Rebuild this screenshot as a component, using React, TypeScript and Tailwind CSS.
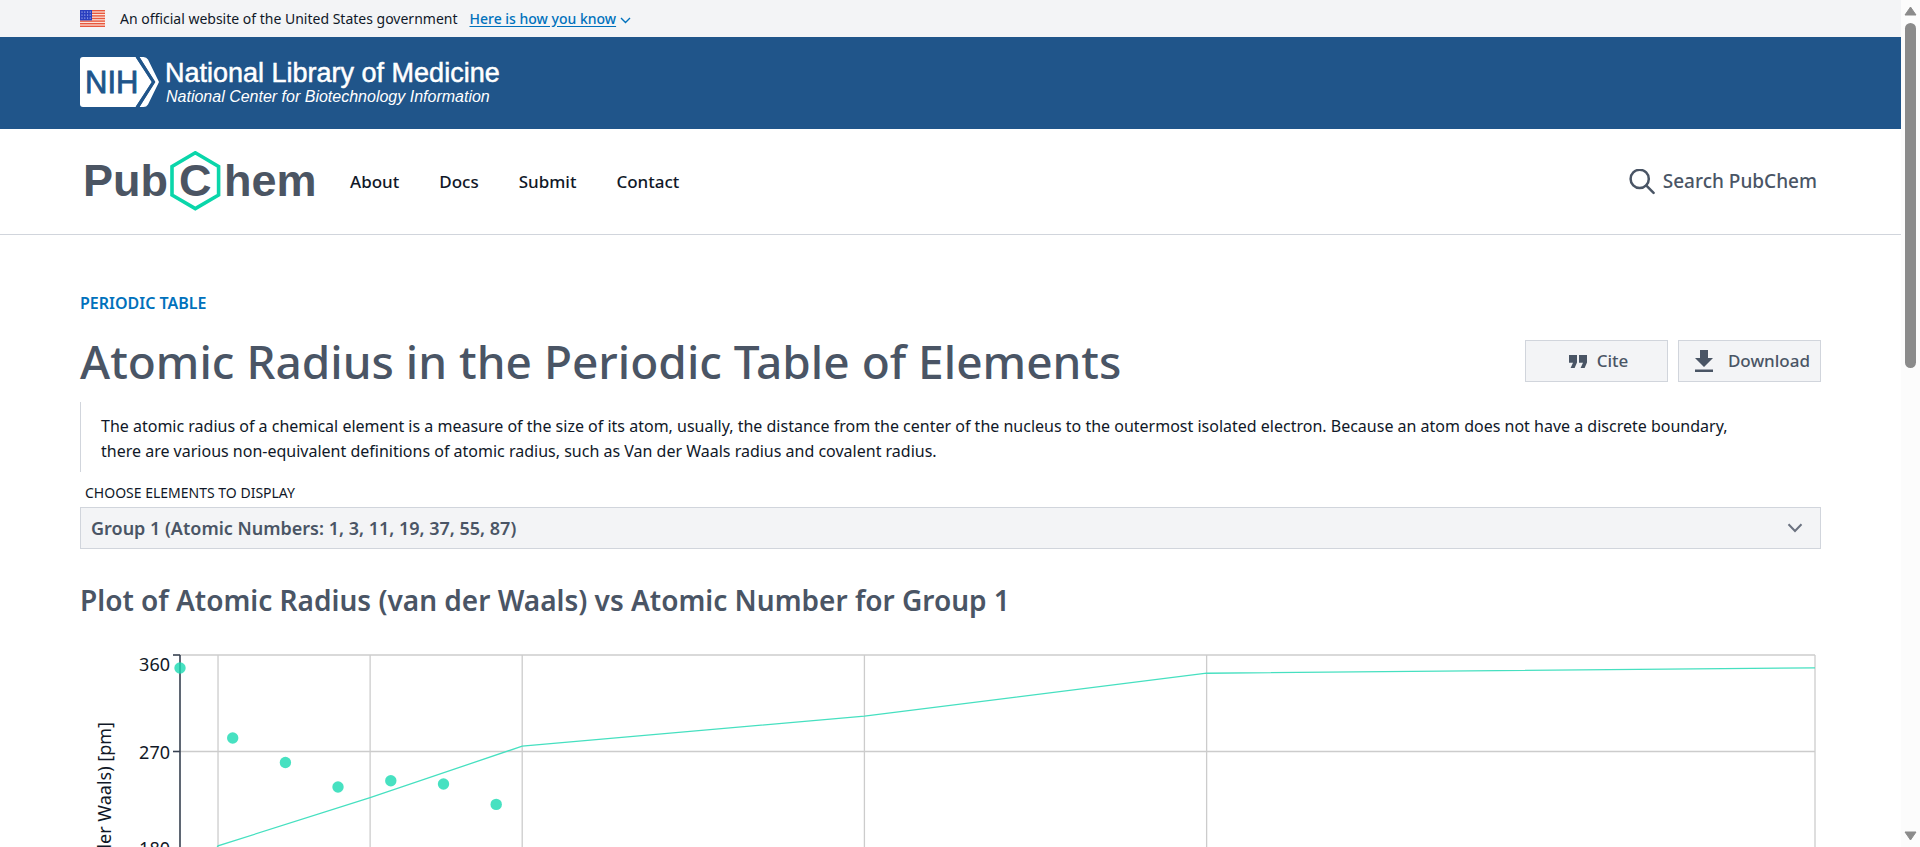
import React from "react";

const navItems = ["About", "Docs", "Submit", "Contact"];

const groupOptions = [
  "Group 1 (Atomic Numbers: 1, 3, 11, 19, 37, 55, 87)",
  "Group 2 (Atomic Numbers: 4, 12, 20, 38, 56, 88)",
];

const radii = [
  { z: 1, pm: 120 },
  { z: 3, pm: 182 },
  { z: 11, pm: 227 },
  { z: 19, pm: 275 },
  { z: 37, pm: 303 },
  { z: 55, pm: 343 },
  { z: 87, pm: 348 },
];

const points = [
  [100, 28],
  [152.7, 98],
  [205.4, 122.5],
  [258, 147],
  [310.8, 140.7],
  [363.5, 144],
  [416.2, 164.4],
];

const left = 100;
const right = 1735;
const xOf = (z: number) => left + ((z - 1) * (right - left)) / 86;
const yOf = (pm: number) => 15 + ((360 - pm) * 96.5) / 90;

function Flag() {
  return (
    <svg className="h-[17px] w-[25px] shrink-0" viewBox="0 0 25 17" aria-label="U.S. flag" role="img">
      <rect width="25" height="17" fill="#fbe3da" />
      {[0, 1, 2, 3, 4, 5, 6].map((i) => (
        <rect key={i} y={i * 2.6} width="25" height="1.4" fill="#e8573d" />
      ))}
      <rect width="12" height="10.4" fill="#2a3fc0" />
      {[2, 5, 8].map((y) =>
        [2, 4.8, 7.6, 10.2].map((x) => (
          <circle key={`${x}-${y}`} cx={x} cy={y} r="0.6" fill="#dfe4ff" />
        ))
      )}
    </svg>
  );
}

function NihLogo() {
  return (
    <svg className="h-[50px] w-[425px]" viewBox="0 0 425 50" role="img" aria-label="NIH National Library of Medicine">
      <path d="M3 0H55.5L72 25L55.5 50H3Q0 50 0 47V3Q0 0 3 0Z" fill="#fff" />
      <path d="M59.5 0H63.5Q66.5 0 68 2.5L79 25L68 47.5Q66.5 50 63.5 50H59.5L75 25Z" fill="#fff" />
      <path d="M57.5 0L73.5 25L57.5 50" fill="none" stroke="#20558a" strokeWidth="3.2" />
      <text x="5" y="36" fontSize="31" fill="#20558a" stroke="#20558a" strokeWidth="0.8" fontFamily="Liberation Sans, Arial, sans-serif">
        NIH
      </text>
      <text x="85" y="25" fontSize="27" fill="#fff" stroke="#fff" strokeWidth="0.5" fontFamily="Liberation Sans, Arial, sans-serif">
        National Library of Medicine
      </text>
      <text x="86" y="45" fontSize="16" fill="#fff" fontStyle="italic" fontFamily="Liberation Sans, Arial, sans-serif">
        National Center for Biotechnology Information
      </text>
    </svg>
  );
}

function PubChemLogo() {
  return (
    <svg className="h-[62px] w-[240px]" viewBox="0 0 240 62" role="img" aria-label="PubChem">
      <g fill="#4b5563" fontFamily="Liberation Sans, Arial, sans-serif" fontWeight="700" fontSize="45">
        <text x="3" y="45">Pub</text>
        <text x="99" y="45">C</text>
        <text x="144" y="45">hem</text>
      </g>
      <path d="M115.3 1.8L138.6 15.5V44L115.3 57.6L92 44V15.5Z" fill="none" stroke="#0ad6aa" strokeWidth="3.6" />
    </svg>
  );
}

function Scrollbar() {
  return (
    <div className="flex w-[19px] shrink-0 flex-col items-center bg-[#fcfcfc] pt-1.5 pb-1.5" aria-hidden="true">
      <svg className="h-[10px] w-[13px]" viewBox="0 0 13 10">
        <path d="M6.5 1L12 9H1Z" fill="#8b8b8b" stroke="#8b8b8b" strokeLinejoin="round" />
      </svg>
      <div className="mt-[7px] h-[345px] w-[11px] rounded-full bg-[#8b8b8b]" />
      <svg className="mt-auto h-[10px] w-[13px]" viewBox="0 0 13 10">
        <path d="M6.5 9L12 1H1Z" fill="#8b8b8b" stroke="#8b8b8b" strokeLinejoin="round" />
      </svg>
    </div>
  );
}

function RadiusPlot() {
  return (
    <svg className="mt-5 block w-full" viewBox="0 0 1741 460" role="img" aria-label="Atomic radius against atomic number">
      <g stroke="#ccc" strokeWidth="1.3" fill="none">
        {[360, 270, 180, 90, 0].map((v) => (
          <line key={v} x1={left} x2={right} y1={yOf(v)} y2={yOf(v)} />
        ))}
        {radii.slice(1).map((r) => (
          <line key={r.z} x1={xOf(r.z)} x2={xOf(r.z)} y1={yOf(360)} y2={yOf(0)} />
        ))}
      </g>
      <g stroke="#374151" strokeWidth="1.6">
        <line x1={left} x2={left} y1={yOf(360)} y2={yOf(0)} />
        {[360, 270, 180, 90, 0].map((v) => (
          <line key={v} x1={left - 7} x2={left} y1={yOf(v)} y2={yOf(v)} />
        ))}
      </g>
      <g fill="#111827" fontSize="18" textAnchor="end">
        {[360, 270, 180, 90, 0].map((v) => (
          <text key={v} x={left - 10} y={v === 360 ? 31 : yOf(v) + 7}>
            {v}
          </text>
        ))}
        <text transform="translate(31 82) rotate(-90)">Atomic Radius (van der Waals) [pm]</text>
      </g>
      <polyline
        points={radii.map((r) => `${xOf(r.z)},${yOf(r.pm)}`).join(" ")}
        fill="none"
        stroke="#46e0c0"
        strokeWidth="1.3"
      />
      <g fill="#19d9b1" fillOpacity="0.8">
        {points.map(([x, y]) => (
          <circle key={x} cx={x} cy={y} r="5.7" />
        ))}
      </g>
    </svg>
  );
}

export default function App() {
  return (
    <div className="flex h-screen overflow-hidden bg-white font-['Noto_Sans',sans-serif] text-gray-900">
      <div className="min-w-0 flex-1 overflow-hidden">
        <div className="flex h-[37px] items-center bg-gray-100 px-20 text-sm">
          <Flag />
          <span className="ml-[15px]">An official website of the United States government</span>
          <a href="#know" className="ml-3 flex items-center gap-1 font-medium text-[#0071bc]">
            <span className="underline underline-offset-2">Here is how you know</span>
            <svg className="mt-1 h-[7px] w-[11px]" viewBox="0 0 11 7" fill="none" stroke="currentColor" strokeWidth="1.4">
              <path d="M1 1L5.5 5.5L10 1" />
            </svg>
          </a>
        </div>

        <div className="bg-[#20558a] px-20 pt-5 pb-[22px]">
          <a href="#nlm" className="block">
            <NihLogo />
          </a>
        </div>

        <header className="flex h-[106px] items-center border-b border-gray-300 px-20">
          <a href="#home">
            <PubChemLogo />
          </a>
          <nav className="ml-[30px] flex gap-10 text-[17px] font-medium">
            {navItems.map((item) => (
              <a key={item} href={`#${item.toLowerCase()}`}>
                {item}
              </a>
            ))}
          </nav>
          <button type="button" className="mr-1 ml-auto flex items-center gap-2 text-[19px] font-medium text-gray-600">
            <svg className="h-[26px] w-[26px]" viewBox="0 0 26 26" fill="none" stroke="currentColor" strokeWidth="2.5" strokeLinecap="round">
              <circle cx="10.7" cy="9.9" r="9.1" />
              <path d="M17.4 16.6L24.6 23.8" />
            </svg>
            Search PubChem
          </button>
        </header>

        <main className="px-20 pt-14">
          <a href="#periodic-table" className="block font-semibold text-[#0071bc]">
            PERIODIC TABLE
          </a>
          <div className="mt-4 flex items-center gap-2.5 text-gray-600">
            <h1 className="mr-auto text-[46px] leading-[60px] font-medium">
              Atomic Radius in the Periodic Table of Elements
            </h1>
            <button type="button" className="flex h-[42px] w-[143px] items-center justify-center gap-2.5 border border-gray-300 bg-gray-100 pl-1 text-[17px] font-medium">
              <svg className="h-[13px] w-[18px]" viewBox="0 0 18 13" fill="currentColor">
                <path d="M0 0H8V7.5L5.6 13H1.6L4 7.8H0Z" />
                <path d="M10 0H18V7.5L15.6 13H11.6L14 7.8H10Z" />
              </svg>
              Cite
            </button>
            <button type="button" className="flex h-[42px] w-[143px] items-center justify-between border border-gray-300 bg-gray-100 pr-2.5 pl-4 text-[17px] font-medium">
              <svg className="h-[22px] w-[18px]" viewBox="0 0 18 22" fill="currentColor">
                <path d="M5 0H13V8H18L9 17L0 8H5Z" />
                <path d="M0 19.5H18V22H0Z" />
              </svg>
              Download
            </button>
          </div>
          <p className="mt-[11px] border-l border-gray-300 pt-3 pb-2 pl-5 leading-[25px]">
            The atomic radius of a chemical element is a measure of the size of its atom, usually, the distance from the
            center of the nucleus to the outermost isolated electron. Because an atom does not have a discrete boundary,
            <br />
            there are various non-equivalent definitions of atomic radius, such as Van der Waals radius and covalent
            radius.
          </p>
          <label htmlFor="group" className="mt-[11px] mb-1 block pl-[5px] text-sm">
            CHOOSE ELEMENTS TO DISPLAY
          </label>
          <div className="relative">
            <select
              id="group"
              className="block h-[42px] w-full appearance-none border border-gray-300 bg-gray-100 px-2.5 text-lg font-semibold text-gray-600"
            >
              {groupOptions.map((o) => (
                <option key={o}>{o}</option>
              ))}
            </select>
            <svg className="pointer-events-none absolute top-4 right-[18px] h-[10px] w-4" viewBox="0 0 16 10" fill="none" stroke="#6b7280" strokeWidth="2">
              <path d="M1.5 1.2L8 8L14.5 1.2" />
            </svg>
          </div>
          <h2 className="mt-[31px] text-[28px] leading-10 font-semibold text-gray-600">
            Plot of Atomic Radius (van der Waals) vs Atomic Number for Group 1
          </h2>
          <RadiusPlot />
        </main>
      </div>
      <Scrollbar />
    </div>
  );
}
